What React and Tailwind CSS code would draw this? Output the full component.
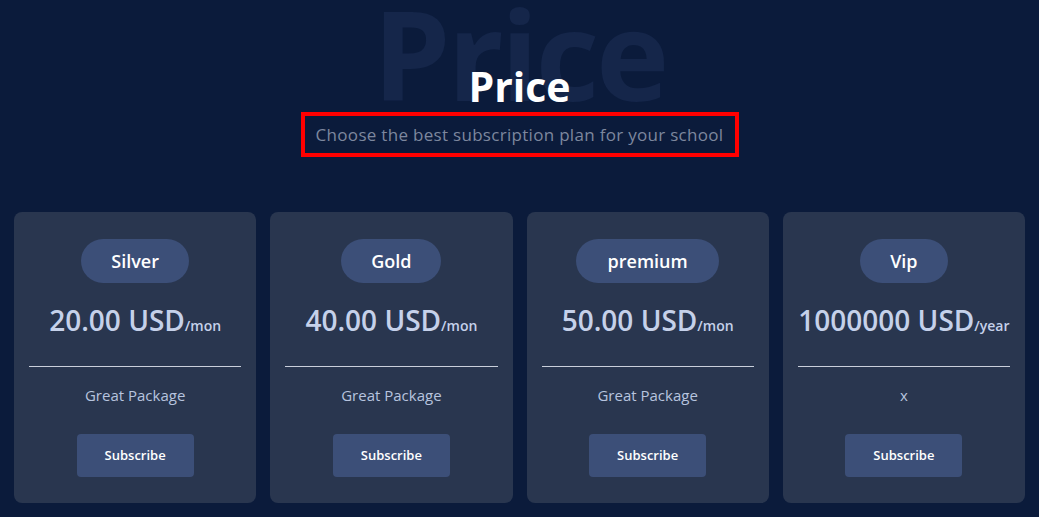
import React from 'react';

const plans = [
  { name: 'Silver', price: '20.00', period: 'mon', desc: 'Great Package', badge: 'w-[108px]' },
  { name: 'Gold', price: '40.00', period: 'mon', desc: 'Great Package', badge: 'w-[100px]' },
  { name: 'premium', price: '50.00', period: 'mon', desc: 'Great Package', badge: 'w-[143px]' },
  { name: 'Vip', price: '1000000', period: 'year', desc: 'x', badge: 'w-[88px]' },
];

function PlanCard({ plan }) {
  return (
    <div className="bg-[#29364f] rounded-lg px-[15px] pt-[27px] pb-[26px] flex flex-col items-center">
      <div className={`${plan.badge} h-[44px] rounded-full bg-[#3c4f78] flex items-center justify-center text-white text-[18px] font-semibold`}>
        {plan.name}
      </div>
      <div className="mt-[19px] text-[#c5d1ea] font-semibold text-[28px] leading-[36px] whitespace-nowrap">
        {plan.price} USD<span className="text-[14px]">/{plan.period}</span>
      </div>
      <div className="w-full h-px bg-[#c9cfdb] mt-[22px]" />
      <p className="mt-[18px] text-[#b7c4df] text-[15px] font-medium leading-5">{plan.desc}</p>
      <button className="mt-[29px] w-[117px] h-[43px] rounded bg-[#3c4f78] text-white text-[13px] font-semibold">
        Subscribe
      </button>
    </div>
  );
}

export default function App() {
  return (
    <div className="min-h-[517px] bg-[#0b1b3b] px-[14px] pb-4 overflow-hidden" style={{ fontFamily: '"Open Sans", "Liberation Sans", sans-serif' }}>
      <div className="relative flex flex-col items-center pt-[61px]">
        <div className="absolute top-[3px] left-0 right-0 text-center text-[124px] font-bold text-[#15264a] leading-[0.8] select-none tracking-tight">
          Price
        </div>
        <h1 className="relative text-white text-[41px] font-bold leading-[50px]">Price</h1>
        <div className="relative mt-[1px] w-[438px] h-[45px] border-4 border-[#ff0000] flex items-center justify-center">
          <p className="text-[#7d879e] text-[17px] tracking-[0.3px]">Choose the best subscription plan for your school</p>
        </div>
      </div>
      <div className="grid grid-cols-4 gap-[14px] mt-[55px]">
        {plans.map((p) => (
          <PlanCard key={p.name} plan={p} />
        ))}
      </div>
    </div>
  );
}
